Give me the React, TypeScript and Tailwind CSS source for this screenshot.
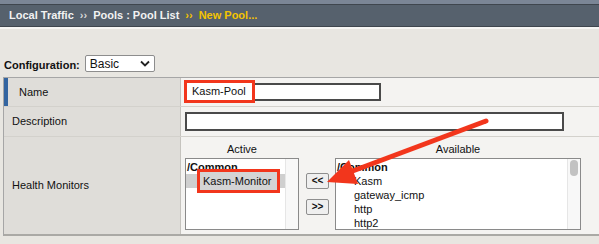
const availableItems = ["Kasm", "gateway_icmp", "http", "http2"];

const Header = () => (
  <div className="h-[29px] flex flex-col">
    <div className="h-[4px] bg-[#7b8696]" />
    <div className="h-[1px] bg-[#3f464e]" />
    <div className="h-[21px] bg-[#56616d] flex items-center pl-[9px] gap-[6px] text-[11px] font-bold text-[#f2f2f2]">
      <span>Local Traffic</span>
      <span className="text-[#d8d8d8]">››</span>
      <span>Pools : Pool List</span>
      <span className="text-[#f5c400]">››</span>
      <span className="text-[#f5c400]">New Pool...</span>
    </div>
    <div className="h-[1px] bg-[#3f464e]" />
    <div className="h-[2px] bg-[#f6f6f4]" />
  </div>
);

const ListBox = ({ width, children, thumb }: { width: string; children: React.ReactNode; thumb?: boolean }) => (
  <div className={`${width} h-[72px] bg-white border border-[#8a8a8a] flex`}>
    <div className="flex-1 pt-[1px] leading-[14px]">{children}</div>
    <div className="w-[13px] bg-[#f8f8f8] border-l border-[#e6e6e6] pt-[1px] flex justify-center">
      {thumb && <div className="w-[8px] h-[16px] rounded-full bg-[#c2c2c2]" />}
    </div>
  </div>
);

export default function App() {
  return (
    <div className="relative w-[599px] h-[244px] overflow-hidden bg-[#e8e6e1] font-['Liberation_Sans',Arial,sans-serif] text-[11px] text-[#111]">
      <Header />

      <div className="mt-[26px] h-[17px] flex items-center pl-[4px]">
        <span className="font-bold mt-[4px]">Configuration:</span>
        <div className="ml-[5px] w-[70px] h-[17px] bg-white border border-[#8d8d8d] flex items-center justify-between px-[4px] rounded-[2px]">
          <span className="text-[12px]">Basic</span>
          <svg width="10" height="7" viewBox="0 0 10 7">
            <path d="M1 1.5 L5 5.5 L9 1.5" fill="none" stroke="#222" strokeWidth="1.8" />
          </svg>
        </div>
      </div>

      <div className="mt-[5px] ml-[3px] border-t border-l border-[#a6a6a6] flex flex-col">
        {/* Name */}
        <div className="flex h-[29px] border-b border-[#d3d1cc]">
          <div className="w-[177px] bg-[#dfddd9] border-r border-[#c5c3be] border-l-4 border-l-[#3465a0] flex items-center pl-[11px]">
            Name
          </div>
          <div className="flex-1 bg-[#f4f3f1] flex items-center pl-[5px]">
            <div className="w-[195px] h-[18px] bg-white border-2 border-[#4a4a4a] relative">
              <div className="absolute -left-[4px] -top-[5px] w-[71px] h-[23px] border-[3px] border-[#f2361c] bg-white flex items-center pl-[5px] whitespace-nowrap">
                Kasm-Pool
              </div>
            </div>
          </div>
        </div>

        {/* Description */}
        <div className="flex h-[30px] border-b border-[#d3d1cc]">
          <div className="w-[177px] bg-[#dfddd9] border-r border-[#c5c3be] flex items-center pl-[8px]">
            Description
          </div>
          <div className="flex-1 bg-[#f4f3f1] flex items-center pl-[4px]">
            <div className="w-[379px] h-[19px] bg-white border-2 border-[#4a4a4a]" />
          </div>
        </div>

        {/* Health Monitors */}
        <div className="flex h-[99px] border-b-2 border-[#aaa9a5]">
          <div className="w-[177px] bg-[#dfddd9] border-r border-[#c5c3be] flex items-center pl-[8px]">
            Health Monitors
          </div>
          <div className="flex-1 bg-[#f4f3f1] flex items-start pl-[4px] pt-[4px]">
            <div className="flex flex-col items-center">
              <span className="h-[17px]">Active</span>
              <ListBox width="w-[114px]">
                <div className="font-bold pl-[1px]">/Common</div>
                <div className="relative h-[14px] bg-[#cfcfcf]">
                  <div className="absolute left-[11px] -top-[5px] w-[83px] h-[24px] border-[3px] border-[#f2361c] bg-[#d4d4d4] flex items-center pl-[3px] whitespace-nowrap">
                    Kasm-Monitor
                  </div>
                </div>
              </ListBox>
            </div>

            <div className="ml-[7px] mt-[32px] flex flex-col gap-[10px]">
              <button className="w-[23px] h-[16px] border border-[#8e8e8e] rounded-[2px] bg-[#efefef] text-[10px] font-bold leading-none">
                &lt;&lt;
              </button>
              <button className="w-[23px] h-[16px] border border-[#8e8e8e] rounded-[2px] bg-[#efefef] text-[10px] font-bold leading-none">
                &gt;&gt;
              </button>
            </div>

            <div className="ml-[6px] flex flex-col items-center">
              <span className="h-[17px]">Available</span>
              <ListBox width="w-[246px]" thumb>
                <div className="font-bold pl-[1px]">/Common</div>
                {availableItems.map((item) => (
                  <div key={item} className="pl-[18px]">
                    {item}
                  </div>
                ))}
              </ListBox>
            </div>
          </div>
        </div>
      </div>

      <svg className="absolute left-0 top-0 pointer-events-none" width="599" height="244" viewBox="0 0 599 244">
        <line x1="486" y1="121" x2="350" y2="172" stroke="#f2361c" strokeWidth="5" strokeLinecap="round" />
        <polygon points="327,182 349,160 358,184" fill="#f2361c" />
      </svg>
    </div>
  );
}
